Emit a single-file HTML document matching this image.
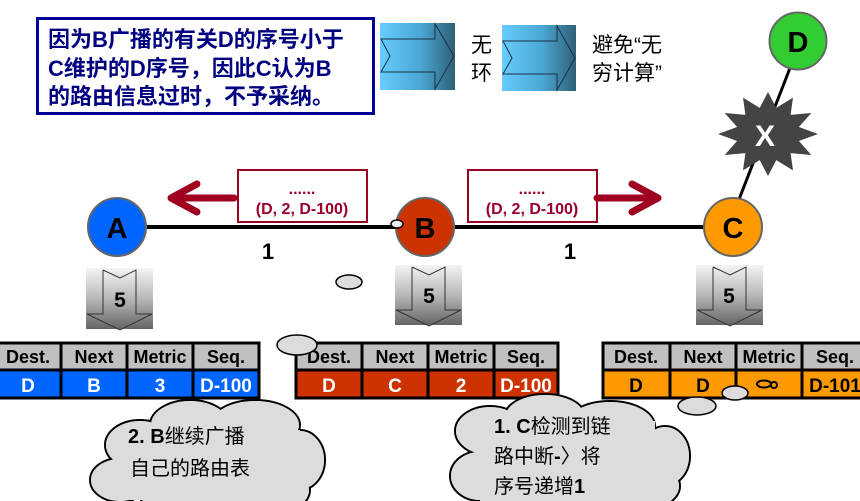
<!DOCTYPE html>
<html><head><meta charset="utf-8"><style>
html,body{margin:0;padding:0;background:#fff;}
body{width:860px;height:501px;overflow:hidden;position:relative;}
svg{position:absolute;left:0;top:0;}
text{font-family:"Liberation Sans","Noto Sans CJK SC",sans-serif;}
</style></head><body>
<svg width="860" height="501" viewBox="0 0 860 501">
<defs>
<linearGradient id="bl" x1="0" x2="1" y1="0" y2="0"><stop offset="0" stop-color="#66ccff"/><stop offset="0.55" stop-color="#4aa6d2"/><stop offset="1" stop-color="#2f5f78"/></linearGradient>
<linearGradient id="gr" x1="0" x2="0" y1="0" y2="1"><stop offset="0" stop-color="#f4f4f4"/><stop offset="0.5" stop-color="#b8b8b8"/><stop offset="1" stop-color="#656565"/></linearGradient>
</defs>
<rect x="37.5" y="18.5" width="336" height="95" fill="#fff" stroke="#000099" stroke-width="3"/>
<g font-size="22" font-weight="bold" fill="#000080">
<text x="48" y="47">因为B广播的有关D的序号小于</text>
<text x="48" y="76">C维护的D序号，因此C认为B</text>
<text x="48" y="104">的路由信息过时，不予采纳。</text>
</g>
<rect x="380" y="23" width="75" height="67" fill="url(#bl)"/>
<polygon points="381,39 435,39 435,24 454,56 435,89 435,72 381,72 390,56" fill="none" stroke="#1a3040" stroke-width="1"/>
<rect x="502" y="25" width="74" height="66" fill="url(#bl)"/>
<polygon points="503,41 557,41 557,26 575,58 557,90 557,74 503,74 512,58" fill="none" stroke="#1a3040" stroke-width="1"/>
<g font-size="21" fill="#000">
<text x="471" y="52">无</text><text x="471" y="80">环</text>
<text x="592" y="52">避免“无</text><text x="592" y="80">穷计算”</text>
</g>
<line x1="790" y1="68" x2="738" y2="202" stroke="#000" stroke-width="3"/>
<polygon points="818,134 798.9,141 811.3,155 790.6,153.1 793,170.4 776.3,160.1 768,176 759.7,160.1 743,170.4 745.4,153.1 724.7,155 737.1,141 718,134 737.1,127 724.7,113 745.4,114.9 743,97.6 759.7,107.9 768,92 776.3,107.9 793,97.6 790.6,114.9 811.3,113 798.9,127" fill="#444"/>
<text x="765" y="146" font-size="30" font-weight="bold" fill="#fff" text-anchor="middle">X</text>
<circle cx="798" cy="41" r="28.5" fill="#33cc33" stroke="#666" stroke-width="2"/>
<text x="798" y="52" font-size="29" font-weight="bold" text-anchor="middle">D</text>
<line x1="140" y1="227" x2="710" y2="227" stroke="#000" stroke-width="4"/>
<circle cx="117" cy="227" r="29" fill="#0066ff" stroke="#666" stroke-width="2"/>
<text x="117" y="238" font-size="29" font-weight="bold" text-anchor="middle">A</text>
<circle cx="425" cy="227" r="29" fill="#cc3300" stroke="#666" stroke-width="2"/>
<text x="425" y="238" font-size="29" font-weight="bold" text-anchor="middle">B</text>
<circle cx="733" cy="227" r="29" fill="#ff9900" stroke="#666" stroke-width="2"/>
<text x="733" y="238" font-size="29" font-weight="bold" text-anchor="middle">C</text>
<ellipse cx="397" cy="224" rx="6" ry="4" fill="#eee" stroke="#000" stroke-width="1.5"/>
<rect x="238" y="170" width="129" height="52" fill="#fff" stroke="#990022" stroke-width="2"/>
<rect x="468" y="170" width="129" height="52" fill="#fff" stroke="#990022" stroke-width="2"/>
<g font-size="16" font-weight="bold" fill="#99002a" text-anchor="middle">
<text x="302" y="194">......</text><text x="302" y="214">(D, 2, D-100)</text>
<text x="532" y="194">......</text><text x="532" y="214">(D, 2, D-100)</text>
</g>
<g stroke="#a00020" stroke-width="7" fill="none" stroke-linecap="round" stroke-linejoin="round">
<line x1="234" y1="198" x2="172" y2="198"/><polyline points="197,184 171,198 197,212"/>
<line x1="597" y1="198" x2="658" y2="198"/><polyline points="632,184 658,198 632,212"/>
</g>
<text x="268" y="259" font-size="22" font-weight="bold" text-anchor="middle">1</text>
<text x="570" y="259" font-size="22" font-weight="bold" text-anchor="middle">1</text>
<g>
<rect x="86" y="268" width="67" height="61" fill="url(#gr)"/>
<polyline points="103,270 120,278 136,270 136,314 152,314 120,330 87,314 103,314 103,270" fill="none" stroke="#333" stroke-width="1"/>
<text x="120" y="307" font-size="21" font-weight="bold" text-anchor="middle">5</text>
<rect x="395" y="265" width="67" height="60" fill="url(#gr)"/>
<polyline points="412,267 429,275 445,267 445,310 461,310 429,326 396,310 412,310 412,267" fill="none" stroke="#333" stroke-width="1"/>
<text x="429" y="303" font-size="21" font-weight="bold" text-anchor="middle">5</text>
<rect x="696" y="265" width="67" height="60" fill="url(#gr)"/>
<polyline points="713,267 730,275 746,267 746,310 762,310 730,326 697,310 713,310 713,267" fill="none" stroke="#333" stroke-width="1"/>
<text x="729" y="303" font-size="21" font-weight="bold" text-anchor="middle">5</text>
</g>
<g stroke="#000" stroke-width="3">
<rect x="-2" y="343" width="261" height="27" fill="#c0c0c0"/>
<rect x="-2" y="370" width="261" height="28" fill="#0066ff"/>
<line x1="61" y1="343" x2="61" y2="398"/><line x1="127" y1="343" x2="127" y2="398"/><line x1="193" y1="343" x2="193" y2="398"/>
<rect x="296" y="343" width="262" height="27" fill="#c0c0c0"/>
<rect x="296" y="370" width="262" height="28" fill="#cc3300"/>
<line x1="362" y1="343" x2="362" y2="398"/><line x1="428" y1="343" x2="428" y2="398"/><line x1="494" y1="343" x2="494" y2="398"/>
<rect x="603" y="343" width="270" height="27" fill="#c0c0c0"/>
<rect x="603" y="370" width="270" height="28" fill="#ff9900"/>
<line x1="670" y1="343" x2="670" y2="398"/><line x1="736" y1="343" x2="736" y2="398"/><line x1="802" y1="343" x2="802" y2="398"/>
</g>
<g font-size="18" font-weight="bold" text-anchor="middle">
<text x="28" y="363">Dest.</text><text x="94" y="363">Next</text><text x="160" y="363">Metric</text><text x="226" y="363">Seq.</text>
<text x="329" y="363">Dest.</text><text x="395" y="363">Next</text><text x="461" y="363">Metric</text><text x="526" y="363">Seq.</text>
<text x="636" y="363">Dest.</text><text x="703" y="363">Next</text><text x="769" y="363">Metric</text><text x="835" y="363">Seq.</text>
</g>
<g font-size="19" font-weight="bold" text-anchor="middle" fill="#fff">
<text x="28" y="392">D</text><text x="94" y="392">B</text><text x="160" y="392">3</text><text x="226" y="392">D-100</text>
<text x="329" y="392">D</text><text x="395" y="392">C</text><text x="461" y="392">2</text><text x="526" y="392">D-100</text>
</g>
<g font-size="19" font-weight="bold" text-anchor="middle" fill="#000">
<text x="636" y="392">D</text><text x="703" y="392">D</text><text x="835" y="392">D-101</text>
</g>
<ellipse cx="764" cy="384" rx="7" ry="3.5" fill="none" stroke="#000" stroke-width="2"/>
<circle cx="774" cy="385" r="3" fill="none" stroke="#000" stroke-width="2"/>
<g fill="#dcdcdc" stroke="#000" stroke-width="1.5">
<ellipse cx="349" cy="282" rx="13" ry="7"/>
<ellipse cx="297" cy="345" rx="20" ry="10"/>
<ellipse cx="735" cy="393" rx="13" ry="7"/>
<ellipse cx="697" cy="406" rx="19" ry="9"/>
</g>
<g transform="translate(0,5)">
<g stroke="#000" stroke-width="2" fill="#dcdcdc">
<ellipse cx="140" cy="440" rx="35" ry="25"/><ellipse cx="190" cy="420" rx="40" ry="25"/>
<ellipse cx="255" cy="420" rx="45" ry="25"/><ellipse cx="300" cy="455" rx="25" ry="30"/>
<ellipse cx="270" cy="485" rx="40" ry="25"/><ellipse cx="190" cy="490" rx="50" ry="25"/>
<ellipse cx="120" cy="475" rx="30" ry="22"/>
</g>
<g fill="#dcdcdc">
<ellipse cx="140" cy="440" rx="34" ry="24"/><ellipse cx="190" cy="420" rx="39" ry="24"/>
<ellipse cx="255" cy="420" rx="44" ry="24"/><ellipse cx="300" cy="455" rx="24" ry="29"/>
<ellipse cx="270" cy="485" rx="39" ry="24"/><ellipse cx="190" cy="490" rx="49" ry="24"/>
<ellipse cx="120" cy="475" rx="29" ry="21"/><rect x="125" y="425" width="175" height="70"/>
</g>
</g>
<g font-size="20" fill="#000"><text x="128" y="443"><tspan font-weight="bold">2. B</tspan>继续广播</text><text x="130" y="475">自己的路由表</text></g>
<g transform="translate(0,6)">
<g stroke="#000" stroke-width="2" fill="#dcdcdc">
<ellipse cx="490" cy="425" rx="35" ry="25"/><ellipse cx="545" cy="410" rx="40" ry="22"/>
<ellipse cx="610" cy="420" rx="45" ry="25"/><ellipse cx="665" cy="450" rx="25" ry="30"/>
<ellipse cx="640" cy="480" rx="40" ry="25"/><ellipse cx="560" cy="492" rx="55" ry="25"/>
<ellipse cx="480" cy="470" rx="30" ry="25"/>
</g>
<g fill="#dcdcdc">
<ellipse cx="490" cy="425" rx="34" ry="24"/><ellipse cx="545" cy="410" rx="39" ry="21"/>
<ellipse cx="610" cy="420" rx="44" ry="24"/><ellipse cx="665" cy="450" rx="24" ry="29"/>
<ellipse cx="640" cy="480" rx="39" ry="24"/><ellipse cx="560" cy="492" rx="54" ry="24"/>
<ellipse cx="480" cy="470" rx="29" ry="24"/><rect x="480" y="415" width="175" height="86"/>
</g>
</g>
<g font-size="20" fill="#000"><text x="494" y="433"><tspan font-weight="bold">1. C</tspan>检测到链</text><text x="494" y="463">路中断<tspan font-weight="bold">-</tspan>〉将</text><text x="494" y="493">序号递增<tspan font-weight="bold">1</tspan></text></g>
</svg>
</body></html>
